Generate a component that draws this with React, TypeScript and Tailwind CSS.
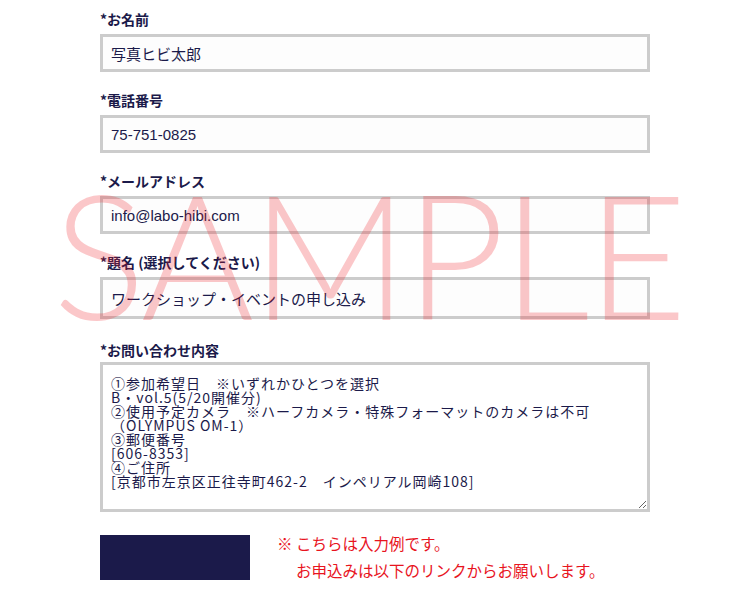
import React from "react";

const labelCls =
	"block h-[20px] leading-[20px] text-[14px] font-bold text-[#1b1a4a] font-['Noto_Sans_CJK_JP',sans-serif]";
const inputCls =
	"block w-full border-[3px] border-[#cccccc] bg-[#fdfdfd] pl-2 text-[15px] text-[#1b1a4a] outline-none font-['Liberation_Sans','Noto_Sans_CJK_JP',sans-serif]";

const inquiry = [
	"①参加希望日　※いずれかひとつを選択",
	"B・vol.5(5/20開催分)",
	"②使用予定カメラ　※ハーフカメラ・特殊フォーマットのカメラは不可",
	"（OLYMPUS OM-1）",
	"③郵便番号",
	"[606-8353]",
	"④ご住所",
	"[京都市左京区正往寺町462-2　インペリアル岡崎108]",
].join("\n");

const App = () => {
	return (
		<div className="relative w-[752px] h-[600px] overflow-hidden bg-white">
			<div className="pl-[100px] pt-[9px] w-[650px]">
				<div className="flex flex-col">
					<label className={labelCls + " mb-[5px]"}>*お名前</label>
					<input className={inputCls + " h-[38px]"} readOnly defaultValue="写真ヒビ太郎" />

					<label className={labelCls + " mt-[18px] mb-[5px]"}>*電話番号</label>
					<input className={inputCls + " h-[38px]"} readOnly defaultValue="75-751-0825" />

					<label className={labelCls + " mt-[18px] mb-[5px]"}>*メールアドレス</label>
					<input className={inputCls + " h-[38px]"} readOnly defaultValue="info@labo-hibi.com" />

					<label className={labelCls + " mt-[18px] mb-[5px]"}>*題名 (選択してください)</label>
					<input
						className={inputCls + " h-[42px]"}
						readOnly
						defaultValue="ワークショップ・イベントの申し込み"
					/>

					<label className={labelCls + " mt-[21px] mb-[2px]"}>*お問い合わせ内容</label>
					<textarea
						className="block w-full h-[150px] border-[3px] border-[#cccccc] bg-white pl-2 pt-[11px] text-[14px] leading-[14px] tracking-[1px] text-[#1b1a4a] outline-none font-['Noto_Sans_CJK_JP',sans-serif]"
						readOnly
						defaultValue={inquiry}
					/>
				</div>

				<div className="mt-[18px] flex items-center gap-[27px]">
					<button className="w-[150px] h-[45px] bg-[#1b1a4a]"></button>
					<div className="text-[15.5px] leading-[27px] text-[#e8141e] font-['Noto_Sans_CJK_JP',sans-serif]">
						<div>※ こちらは入力例です。</div>
						<div className="pl-[19px]">お申込みは以下のリンクからお願いします。</div>
					</div>
				</div>
			</div>

			<div className="pointer-events-none absolute left-[53px] top-[167px] text-[173px] leading-none font-light tracking-[-3px] text-[rgba(240,30,40,0.25)] font-['Lato',sans-serif] whitespace-nowrap">
				SAMPLE
			</div>
		</div>
	);
};

export default App;
